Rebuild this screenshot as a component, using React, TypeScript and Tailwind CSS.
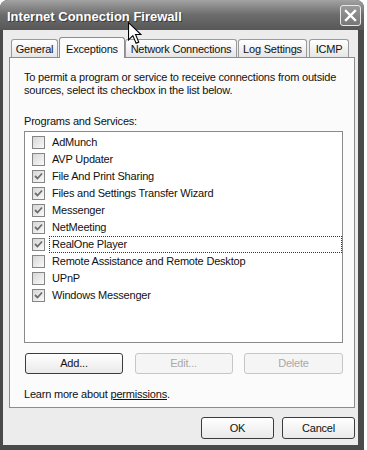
import React from "react";

const items: { label: string; checked: boolean; focus?: boolean }[] = [
  { label: "AdMunch", checked: false },
  { label: "AVP Updater", checked: false },
  { label: "File And Print Sharing", checked: true },
  { label: "Files and Settings Transfer Wizard", checked: true },
  { label: "Messenger", checked: true },
  { label: "NetMeeting", checked: true },
  { label: "RealOne Player", checked: true, focus: true },
  { label: "Remote Assistance and Remote Desktop", checked: false },
  { label: "UPnP", checked: false },
  { label: "Windows Messenger", checked: true },
];

function CheckBox({ checked }: { checked: boolean }) {
  return (
    <div className="w-[13px] h-[13px] shrink-0 border border-[#858585] bg-gradient-to-br from-[#d6d6d6] to-[#fafafa] flex items-center justify-center">
      {checked && (
        <svg width="9" height="9" viewBox="0 0 9 9">
          <path d="M1 4 L3.5 6.5 L8 1.5" stroke="#6e6e6e" strokeWidth="1.8" fill="none" />
        </svg>
      )}
    </div>
  );
}

function Tab({ label, w, selected }: { label: string; w: string; selected?: boolean }) {
  if (selected) {
    return (
      <div
        className={`${w} h-[21px] -mb-[1px] relative z-10 border border-b-0 border-[#8c8c8c] rounded-t-[3px] bg-[#fbfbfb] flex items-start justify-center pt-[3px]`}
      >
        <span>{label}</span>
      </div>
    );
  }
  return (
    <div
      className={`${w} h-[18px] mt-[2px] border border-b-0 border-[#9a9a9a] rounded-t-[3px] bg-gradient-to-b from-[#ffffff] to-[#e6e6e6] flex items-center justify-center pt-[2px]`}
    >
      <span>{label}</span>
    </div>
  );
}

function Btn({ label, w, h, disabled }: { label: string; w: string; h: string; disabled?: boolean }) {
  return (
    <div
      className={`${w} ${h} rounded-[3px] border flex items-center justify-center ${
        disabled
          ? "border-[#c6c6c6] bg-[#f5f5f5] text-[#a9a9a9]"
          : "border-[#3c3c3c] bg-gradient-to-b from-[#ffffff] to-[#e9e9e9] text-[#111]"
      }`}
    >
      {label}
    </div>
  );
}

export default function App() {
  return (
    <div className="w-[367px] h-[450px] bg-white relative overflow-hidden font-['Liberation_Sans',Arial,sans-serif] text-[11px] tracking-[-0.2px] text-[#111]">
      <div className="w-[364px] h-[450px] flex flex-col rounded-t-[8px] bg-[#4a4a4a] overflow-hidden">
        {/* Title bar */}
        <div className="h-[30px] shrink-0 flex items-center justify-between pl-[7px] pr-[3px] bg-gradient-to-b from-[#a3a3a3] via-[#6c6c6c] to-[#575757]">
          <span className="text-white font-bold text-[13px] tracking-normal pt-[3px] [text-shadow:1px_1px_0_#3a3a3a]">
            Internet Connection Firewall
          </span>
          <div className="w-[21px] h-[21px] rounded-[3px] border border-[#e8e8e8] bg-gradient-to-b from-[#9a9a9a] to-[#777] flex items-center justify-center">
            <svg width="13" height="13" viewBox="0 0 13 13">
              <path d="M2 2 L11 11 M11 2 L2 11" stroke="white" strokeWidth="2.4" strokeLinecap="square" />
            </svg>
          </div>
        </div>

        {/* Body */}
        <div className="flex-1 ml-[3px] mr-[6px] mb-[5px] bg-[#ececec] flex flex-col pl-[6px] pr-[3px]">
          {/* Tabs */}
          <div className="flex items-start pt-[7px] pl-[2px] h-[27px] shrink-0">
            <Tab label="General" w="w-[47px]" />
            <div className="w-[1px]" />
            <Tab label="Exceptions" w="w-[66px]" selected />
            <Tab label="Network Connections" w="w-[112px]" />
            <div className="w-[1px]" />
            <Tab label="Log Settings" w="w-[69px]" />
            <div className="w-[2px]" />
            <Tab label="ICMP" w="w-[40px]" />
          </div>

          {/* Panel */}
          <div className="h-[351px] shrink-0 border border-[#8c8c8c] bg-[#fbfbfb] flex flex-col pl-[14px] pr-[11px] pt-[13px]">
            <p className="leading-[13px]">
              To permit a program or service to receive connections from outside
              <br />
              sources, select its checkbox in the list below.
            </p>
            <p className="leading-[13px] mt-[18px]">Programs and Services:</p>
            <div className="mt-[3px] h-[212px] border border-[#8a8a8a] bg-white flex flex-col pl-[7px] pt-[2px] pr-[0px]">
              {items.map((it) => (
                <div key={it.label} className="h-[17px] flex items-center">
                  <CheckBox checked={it.checked} />
                  <div
                    className={`ml-[4px] flex-1 h-[17px] flex items-center pl-[2px] border border-dotted ${
                      it.focus ? "border-[#333]" : "border-transparent"
                    }`}
                  >
                    {it.label}
                  </div>
                </div>
              ))}
            </div>
            <div className="mt-[10px] flex justify-between pl-[1px]">
              <Btn label="Add..." w="w-[98px]" h="h-[21px]" />
              <Btn label="Edit..." w="w-[98px]" h="h-[21px]" disabled />
              <Btn label="Delete" w="w-[99px]" h="h-[21px]" disabled />
            </div>
            <p className="mt-[14px] leading-[13px]">
              Learn more about <span className="underline">permissions</span>.
            </p>
          </div>

          {/* Bottom buttons */}
          <div className="flex justify-end gap-[8px] pt-[9px] pr-[0px]">
            <Btn label="OK" w="w-[73px]" h="h-[22px]" />
            <Btn label="Cancel" w="w-[73px]" h="h-[22px]" />
          </div>
        </div>
      </div>

      {/* Mouse cursor */}
      <svg className="absolute left-[128px] top-[22px]" width="14" height="23" viewBox="0 0 13 21">
        <path
          d="M0.5 0.5 L0.5 16.5 L4.5 12.5 L7.5 19.5 L10 18.5 L7 11.5 L12 11.5 Z"
          fill="white"
          stroke="black"
          strokeWidth="1"
          strokeLinejoin="miter"
        />
      </svg>
    </div>
  );
}
